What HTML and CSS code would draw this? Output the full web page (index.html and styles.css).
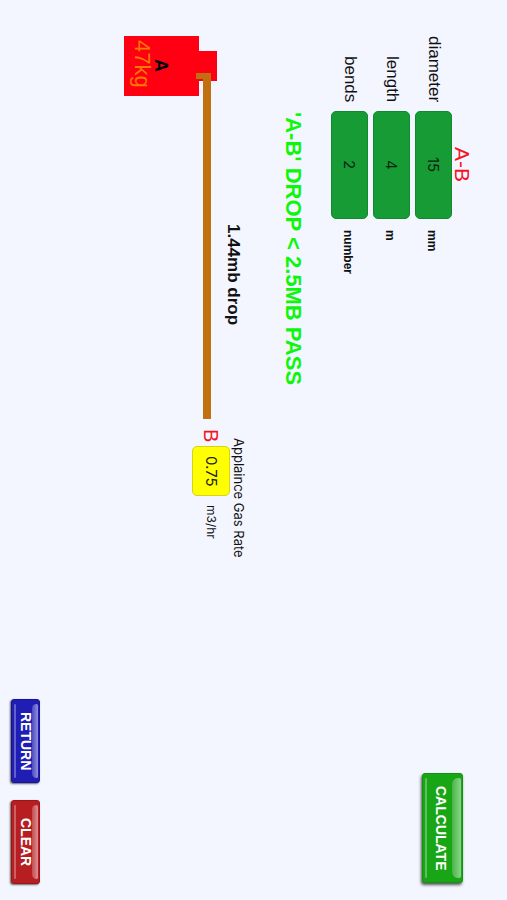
FILE: index.html
```html
<!DOCTYPE html>
<html lang="en">
<head>
    <meta charset="UTF-8">
    <title>Gas pipe sizing</title>
    <link rel="stylesheet" href="styles.css">
</head>
<body>
    <form class="sizing">
        <div class="top">
            <div class="fields">
                <h1 class="run-name">A-B</h1>
                <label class="field-label" for="diameter">diameter</label>
                <input class="field" id="diameter" type="text" value="15">
                <span class="unit">mm</span>
                <label class="field-label" for="length">length</label>
                <input class="field" id="length" type="text" value="4">
                <span class="unit">m</span>
                <label class="field-label" for="bends">bends</label>
                <input class="field" id="bends" type="text" value="2">
                <span class="unit">number</span>
            </div>
            <button class="btn btn-calculate" type="button">CALCULATE</button>
        </div>
        <p class="result">'A-B' DROP &lt; 2.5MB PASS</p>
        <div class="diagram">
            <div class="run">
                <p class="drop">1.44mb drop</p>
                <svg class="pipe" width="94" height="383" viewBox="0 0 94 383">
                    <rect x="0" y="0" width="75" height="60" fill="#ff0012"/>
                    <rect x="74" y="15" width="19" height="30" fill="#ff0012"/>
                    <path d="M72 37H87V383H79V43H72Z" fill="#c07010"/>
                    <text class="point-a" transform="translate(31 23) rotate(90)">A</text>
                    <text class="bottle" transform="translate(11 4) rotate(90)">47kg</text>
                </svg>
            </div>
            <div class="appliance">
                <label class="rate-label" for="rate">Applaince Gas Rate</label>
                <div class="rate-row">
                    <span class="point-b">B</span>
                    <input class="rate" id="rate" type="text" value="0.75">
                    <span class="rate-unit">m3/hr</span>
                </div>
            </div>
        </div>
        <div class="actions">
            <button class="btn btn-return" type="button">RETURN</button>
            <button class="btn btn-clear" type="reset">CLEAR</button>
        </div>
    </form>
</body>
</html>
```

FILE: styles.css
```css
/* the whole screen reads sideways: lines run down, rows stack right to left */
html {
    writing-mode: vertical-rl;
}
body {
    margin: 0;
    background-color: #f3f6ff;
    color: #111;
    font-family: "Liberation Sans", Arial, sans-serif;
}
h1, p {
    margin: 0;
}
input, button {
    box-sizing: border-box;
    writing-mode: vertical-rl;
    margin: 0;
}
.sizing {
    display: flex;
    flex-direction: column;
    box-sizing: border-box;
    min-width: 100vw;
    height: 100vh;
    padding-right: 40px;
    padding-left: 11px;
}
.top {
    display: flex;
    justify-content: space-between;
    align-items: flex-start;
    padding-top: 36px;
    padding-bottom: 17px;
}
.fields {
    display: grid;
    grid-template-columns: 66px 108px auto;
    align-items: center;
    column-gap: 9px;
    row-gap: 5px;
}
.run-name {
    grid-column: 2;
    font-size: 21px;
    font-weight: normal;
    line-height: 10px;
    color: #f5141e;
    text-align: center;
}
.field-label {
    grid-column: 1;
    font-size: 17px;
    line-height: 20px;
    text-align: right;
}
.field {
    width: 37px;
    height: 108px;
    padding: 0;
    border: 1px solid #128a2c;
    border-radius: 5px;
    background-color: #169b35;
    color: #0b2410;
    font-family: Inter, sans-serif;
    font-size: 15px;
    text-align: center;
}
.unit {
    padding-top: 2px;
    padding-right: 4px;
    font-size: 12px;
    font-weight: bold;
}
.result {
    margin-right: 26px;
    padding-top: 112px;
    font-size: 22px;
    font-weight: bold;
    line-height: 24px;
    color: #0cf70c;
}
.diagram {
    display: flex;
    margin-right: 37px;
    padding-top: 36px;
}
.drop {
    margin-left: 4px;
    padding-top: 188px;
    font-size: 17px;
    font-weight: bold;
    line-height: 22px;
}
.pipe {
    display: block;
    writing-mode: horizontal-tb;
}
.point-a {
    font-size: 18px;
    font-weight: bold;
}
.bottle {
    font-size: 22px;
    fill: #ff7a00;
}
.appliance {
    padding-top: 10px;
}
.rate-label {
    display: block;
    margin-left: 4px;
    padding-top: 9px;
    font-family: Inter, sans-serif;
    font-size: 13px;
    line-height: 10px;
}
.rate-row {
    display: flex;
    align-items: center;
}
.point-b {
    width: 20px;
    font-size: 20px;
    line-height: 20px;
    color: #f5141e;
}
.rate {
    width: 38px;
    height: 50px;
    margin-top: 4px;
    margin-bottom: 9px;
    padding: 0;
    border: 1px solid #d3d31c;
    border-radius: 5px;
    background-color: #ffff00;
    color: #222;
    font-family: Inter, sans-serif;
    font-size: 15px;
    text-align: center;
}
.rate-unit {
    font-family: Inter, sans-serif;
    font-size: 12px;
}
.actions {
    display: flex;
    justify-content: flex-end;
    gap: 17px;
    margin-right: auto;
    padding-bottom: 16px;
}
.btn {
    position: relative;
    width: 29px;
    height: 84px;
    padding: 0;
    border: 1px solid;
    border-radius: 3px;
    color: #fff;
    font-family: "Liberation Sans", Arial, sans-serif;
    font-size: 14px;
    font-weight: bold;
    cursor: pointer;
}
/* gloss along both long edges */
.btn::before,
.btn::after {
    content: "";
    position: absolute;
    top: 4px;
    bottom: 4px;
}
.btn::before {
    right: 1px;
    width: 6px;
    border-radius: 6px 2px 2px 6px;
    background: linear-gradient(to left, rgba(255, 255, 255, 0.5), rgba(255, 255, 255, 0.2));
}
.btn::after {
    left: 2px;
    width: 2px;
    border-radius: 2px;
    background-color: rgba(255, 255, 255, 0.3);
}
.btn-calculate {
    width: 41px;
    height: 110px;
    margin-right: 4px;
    padding-right: 3px;
    border-color: #12940f;
    background-color: #18a516;
    box-shadow: -1px 2px 3px #555;
}
.btn-calculate::before {
    width: 9px;
}
.btn-return {
    border-color: #16149a;
    background-color: #201db4;
    box-shadow: -1px 1px 2px #666;
}
.btn-clear {
    border-color: #9c1518;
    background-color: #b71e22;
    box-shadow: -1px 1px 2px #666;
}
```
